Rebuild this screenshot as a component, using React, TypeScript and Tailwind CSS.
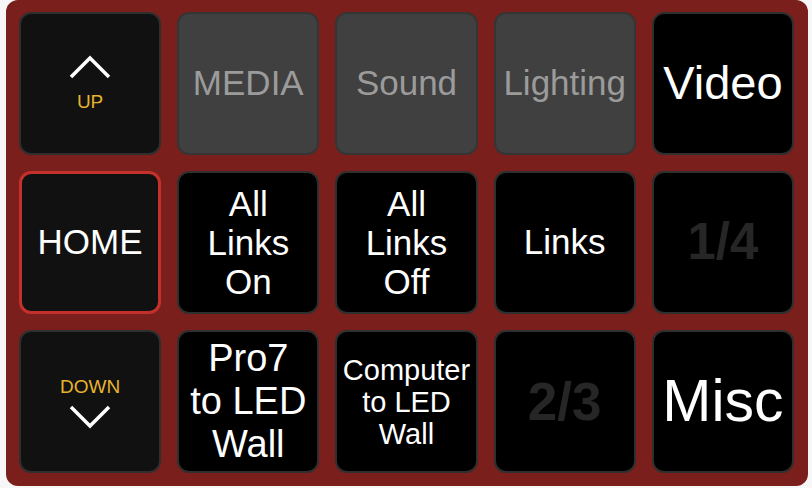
import React from 'react'

type Variant = 'nav' | 'gray' | 'black' | 'dim' | 'home'

interface Key {
  variant: Variant
  lines?: string[]
  size?: string
}

const VARIANT_CLASSES: Record<Variant, string> = {
  nav: 'bg-[#111111] border-2 border-[#2f2f2f] text-white',
  gray: 'bg-[#404040] border-2 border-[#353535] text-[#9b9b9b]',
  black: 'bg-black border-2 border-[#2f2f2f] text-white',
  dim: 'bg-black border-2 border-[#2f2f2f] text-[#262626] font-bold',
  home: 'bg-[#111111] border-[3px] border-[#c4302b] text-white',
}

const Chevron = ({ down = false }: { down?: boolean }) => (
  <svg width="42" height="24" viewBox="0 0 42 24" fill="none">
    <polyline
      points={down ? '2,2 21,21 40,2' : '2,22 21,3 40,22'}
      stroke="white"
      strokeWidth="3.5"
      strokeLinecap="butt"
    />
  </svg>
)

const KEYS: Key[] = [
  { variant: 'nav' },
  { variant: 'gray', lines: ['MEDIA'], size: 'text-[35px]' },
  { variant: 'gray', lines: ['Sound'], size: 'text-[35px]' },
  { variant: 'gray', lines: ['Lighting'], size: 'text-[35px]' },
  { variant: 'black', lines: ['Video'], size: 'text-[47px]' },

  { variant: 'home', lines: ['HOME'], size: 'text-[35px]' },
  { variant: 'black', lines: ['All', 'Links', 'On'], size: 'text-[35px] leading-[39px]' },
  { variant: 'black', lines: ['All', 'Links', 'Off'], size: 'text-[35px] leading-[39px]' },
  { variant: 'black', lines: ['Links'], size: 'text-[35px]' },
  { variant: 'dim', lines: ['1/4'], size: 'text-[51px]' },

  { variant: 'nav' },
  { variant: 'black', lines: ['Pro7', 'to LED', 'Wall'], size: 'text-[38px] leading-[43px]' },
  { variant: 'black', lines: ['Computer', 'to LED', 'Wall'], size: 'text-[29px] leading-[32px]' },
  { variant: 'dim', lines: ['2/3'], size: 'text-[53px]' },
  { variant: 'black', lines: ['Misc'], size: 'text-[59px]' },
]

export default function App() {
  return (
    <div className="w-[812px] h-[488px] bg-[#f7f7f7] pl-[6px] pr-[4px] pb-[2px] font-['Liberation_Sans',Arial,sans-serif]">
      <div className="h-full bg-[#7a1f1b] rounded-[12px] pt-[12px] pl-[13px] pr-[14px] pb-[13px] grid grid-cols-5 grid-rows-3 gap-x-[16px] gap-y-[16px]">
        {KEYS.map((k, i) => {
          // nav keys: first is UP, second is DOWN
          if (k.variant === 'nav') {
            const down = i > 5
            return (
              <div
                key={i}
                className={`${VARIANT_CLASSES.nav} rounded-[12px] flex flex-col items-center justify-center`}
              >
                {down ? (
                  <>
                    <span className="text-[19px] leading-none text-[#e6b32e] mb-[9px] mt-[2px]">DOWN</span>
                    <Chevron down />
                  </>
                ) : (
                  <>
                    <Chevron />
                    <span className="text-[19px] leading-none text-[#e6b32e] mt-[13px] mb-[2px]">UP</span>
                  </>
                )}
              </div>
            )
          }
          return (
            <div
              key={i}
              className={`${VARIANT_CLASSES[k.variant]} ${k.size} rounded-[12px] flex flex-col items-center justify-center text-center`}
            >
              {k.lines?.map((l) => (
                <span key={l}>{l}</span>
              ))}
            </div>
          )
        })}
      </div>
    </div>
  )
}
